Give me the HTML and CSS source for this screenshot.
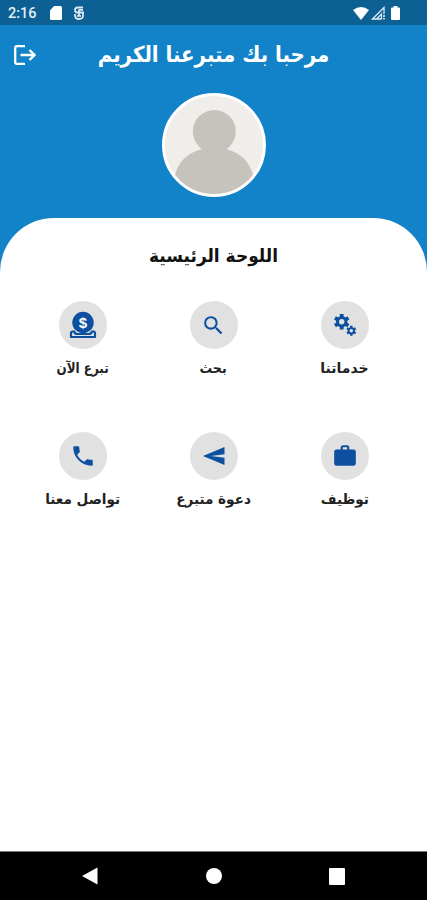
FILE: index.html
```html
<!DOCTYPE html>
<html lang="ar" dir="rtl">
<head>
  <meta charset="UTF-8">
  <meta name="viewport" content="width=device-width, initial-scale=1.0">
  <title>اللوحة الرئيسية</title>
  <link rel="stylesheet" href="styles.css">
</head>
<body>
  <!-- Status bar -->
  <div class="status-bar" dir="ltr">
    <div class="status-left">
      <span class="time">2:16</span>
      <svg width="12" height="14" viewBox="0 0 12 14"><path fill="#fff" d="M4.200 0H10.500Q12 0 12 1.500V12.500Q12 14 10.500 14H1.500Q0 14 0 12.500V4.200Z"/></svg>
      <svg class="debug" width="10" height="14" viewBox="0 0 10 14" fill="none" stroke="#dce9f3" stroke-width="1.800"><path d="M9 1.500H3.500Q1 1.500 1 4Q1 6.500 3.500 6.500H9V9.500Q9 13 5 13Q1 13 1 9V8M5 3.500V9.500M5 3.800H9M3 9.800H7"/></svg>
    </div>
    <div class="status-right">
      <svg width="16" height="13" viewBox="0 0 16 13"><path fill="#fff" d="M0 3Q8-3 16 3L8 13Z"/></svg>
      <svg width="14" height="14" viewBox="0 0 14 14"><path fill="none" stroke="#dce9f3" stroke-width="1.300" d="M10.500 13H1.500L13 1.500V8M5.500 13L10.500 8V13"/><path fill="#fff" d="M12.300 9H13.700V11H12.300ZM12.300 12H13.700V13.500H12.300Z"/></svg>
      <svg class="battery" width="9" height="14" viewBox="0 0 9 14"><path fill="#fff" d="M2.500 0H6.500V1.500H8Q9 1.500 9 2.500V13Q9 14 8 14H1Q0 14 0 13V2.500Q0 1.500 1 1.500H2.500Z"/></svg>
    </div>
  </div>

  <!-- Header -->
  <header class="header">
    <div class="title-row">
      <h1 class="title">مرحبا بك متبرعنا الكريم</h1>
      <button class="logout" aria-label="خروج">
        <svg width="22" height="20" viewBox="0 0 22 20" fill="none" stroke="#fff" stroke-width="2.300"><path d="M11 1.200H3Q1.200 1.200 1.200 3V17Q1.200 18.800 3 18.800H11M6.500 10H20.500M15.500 5L20.500 10L15.500 15"/></svg>
      </button>
    </div>
    <div class="avatar">
      <svg width="98" height="98" viewBox="0 0 98 98" fill="#c6c2bc"><circle cx="49.300" cy="35.500" r="21.500"/><path d="M37 50H61V53Q83 59 88 79V98H10V79Q15 59 37 53Z"/></svg>
    </div>
  </header>

  <!-- Dashboard -->
  <main class="panel">
    <h2 class="panel-title">اللوحة الرئيسية</h2>
    <div class="menu">
      <a class="item">
        <span class="circle">
          <svg width="24" height="24" viewBox="0 0 24 24">
            <defs>
              <g id="gear">
                <path stroke="#0d50a0" stroke-width="3.800" d="M0-7.800V7.800M-6.750-3.900L6.750 3.900M-6.750 3.900L6.750-3.900"/>
                <circle r="5.700" fill="#0d50a0"/>
                <circle r="2.700" fill="#e1e1e1"/>
              </g>
            </defs>
            <use href="#gear" transform="translate(8.700 8.700)"/>
            <use href="#gear" transform="translate(18.300 17.800) scale(.64)"/>
          </svg>
        </span>
        <span class="label services">خدماتنا</span>
      </a>
      <a class="item">
        <span class="circle">
          <svg width="25" height="25" viewBox="0 0 24 24"><path fill="#0d50a0" d="M15.500 14h-.79l-.28-.27A6.471 6.471 0 0 0 16 9.500 6.500 6.500 0 1 0 9.500 16c1.610 0 3.090-.59 4.230-1.570l.27.28v.79l5 4.990L20.490 19l-4.990-5zm-6 0C7.010 14 5 11.990 5 9.500S7.010 5 9.500 5 14 7.010 14 9.500 11.990 14 9.500 14z"/></svg>
        </span>
        <span class="label search">بحث</span>
      </a>
      <a class="item">
        <span class="circle">
          <svg width="28" height="28" viewBox="0 0 28 28">
            <path fill="none" stroke="#0d50a0" stroke-width="2.200" stroke-linejoin="round" stroke-linecap="round" d="M5 20.500H3.500Q2 20.500 2 22.500V26H26V22.500Q26 20.500 24.500 20.500H23M5 20.500Q6 23 8 23H20Q22 23 23 20.500"/>
            <circle cx="14" cy="11.500" r="10.700" fill="#0d50a0"/>
            <text class="dollar" x="14" y="16.500" text-anchor="middle">$</text>
          </svg>
        </span>
        <span class="label donate">تبرع الآن</span>
      </a>
      <a class="item">
        <span class="circle">
          <svg width="26" height="26" viewBox="0 0 24 24"><path fill="#0d50a0" d="M20 6h-4V4c0-1.110-.89-2-2-2h-4c-1.110 0-2 .89-2 2v2H4c-1.110 0-1.990.89-1.990 2L2 19c0 1.110.89 2 2 2h16c1.110 0 2-.89 2-2V8c0-1.110-.89-2-2-2zm-6 0h-4V4h4v2z"/></svg>
        </span>
        <span class="label jobs">توظيف</span>
      </a>
      <a class="item">
        <span class="circle">
          <svg width="24" height="24" viewBox="0 0 24 24"><path fill="#0d50a0" d="M22.500 3L1 12L22.500 21V13.800L9 12L22.500 10.200Z"/></svg>
        </span>
        <span class="label invite">دعوة متبرع</span>
      </a>
      <a class="item">
        <span class="circle">
          <svg width="26" height="26" viewBox="0 0 24 24"><path fill="#0d50a0" d="M6.620 10.790c1.440 2.830 3.760 5.140 6.590 6.590l2.200-2.200c.27-.27.67-.36 1.020-.24 1.120.37 2.330.57 3.570.57.55 0 1 .45 1 1V20c0 .55-.45 1-1 1-9.390 0-17-7.610-17-17 0-.55.45-1 1-1h3.500c.55 0 1 .45 1 1 0 1.250.2 2.450.57 3.570.11.35.03.74-.25 1.020l-2.200 2.200z"/></svg>
        </span>
        <span class="label contact">تواصل معنا</span>
      </a>
    </div>
  </main>

  <!-- Android navigation -->
  <nav class="nav-bar" dir="ltr">
    <svg width="16" height="18" viewBox="0 0 16 18"><path fill="#fff" d="M15.500 .5V17.500L0 9Z"/></svg>
    <svg width="16" height="16" viewBox="0 0 16 16"><circle cx="8" cy="8" r="8" fill="#fff"/></svg>
    <svg width="16" height="17" viewBox="0 0 16 17"><rect width="16" height="17" rx="1" fill="#fff"/></svg>
  </nav>
</body>
</html>
```
FILE: styles.css
```css
* {
  box-sizing: border-box;
}
body {
  margin: 0;
  height: 900px;
  display: flex;
  flex-direction: column;
  overflow: hidden;
  background: #1283c8;
  font-family: "DejaVu Sans", sans-serif;
}
svg {
  display: block;
}
.status-bar {
  height: 25px;
  padding: 1px 27px 0 8px;
  display: flex;
  justify-content: space-between;
  align-items: center;
  background: #0d6094;
}
.status-left,
.status-right {
  display: flex;
  align-items: center;
}
.time {
  width: 42px;
  color: #e3eef6;
  font: 500 14.5px Roboto, sans-serif;
}
.debug {
  margin-left: 12px;
}
.status-right {
  gap: 2px;
}
.battery {
  margin-left: 4px;
}
.header {
  height: 193px;
  flex: none;
}
.title-row {
  height: 59px;
  padding: 0 14px;
  display: grid;
  grid-template-columns: 22px 1fr 22px;
  align-items: center;
}
.title {
  grid-column: 2;
  margin: 0;
  color: #fff;
  font-size: 22px;
  line-height: 30px;
  text-align: center;
  white-space: nowrap;
  transform: scaleX(.9);
}
.logout {
  padding: 0;
  border: 0;
  background: none;
}
.avatar {
  width: 104px;
  height: 104px;
  margin: 9px auto 0;
  border: 3px solid #fff;
  border-radius: 50%;
  background: #f0eeeb;
  overflow: hidden;
}
.panel {
  flex: 1;
  padding: 24px 17px 0;
  border-radius: 54px 54px 0 0;
  background: #fff;
}
.panel-title {
  margin: 0;
  color: #111;
  font-size: 18px;
  line-height: 28px;
  text-align: center;
  transform: scaleX(.945);
}
.menu {
  margin-top: 31px;
  display: grid;
  grid-template-columns: repeat(3, 131px);
  grid-auto-rows: 131px;
}
.item {
  display: flex;
  flex-direction: column;
  align-items: center;
}
.circle {
  width: 48px;
  height: 48px;
  display: flex;
  align-items: center;
  justify-content: center;
  border-radius: 50%;
  background: #e1e1e1;
}
.dollar {
  fill: #fff;
  font: bold 15px "Liberation Sans", sans-serif;
}
.label {
  margin-top: 9px;
  color: #222;
  font-size: 14px;
  font-weight: bold;
  line-height: 20px;
  white-space: nowrap;
}
.search {
  transform: scaleX(.9);
}
.donate {
  transform: scaleX(.85);
}
.jobs,
.invite,
.contact {
  transform: scaleX(.97);
}
.nav-bar {
  height: 49px;
  flex: none;
  padding: 0 82px;
  display: flex;
  align-items: center;
  justify-content: space-between;
  border-top: 1px solid #777;
  background: #000;
}
```
